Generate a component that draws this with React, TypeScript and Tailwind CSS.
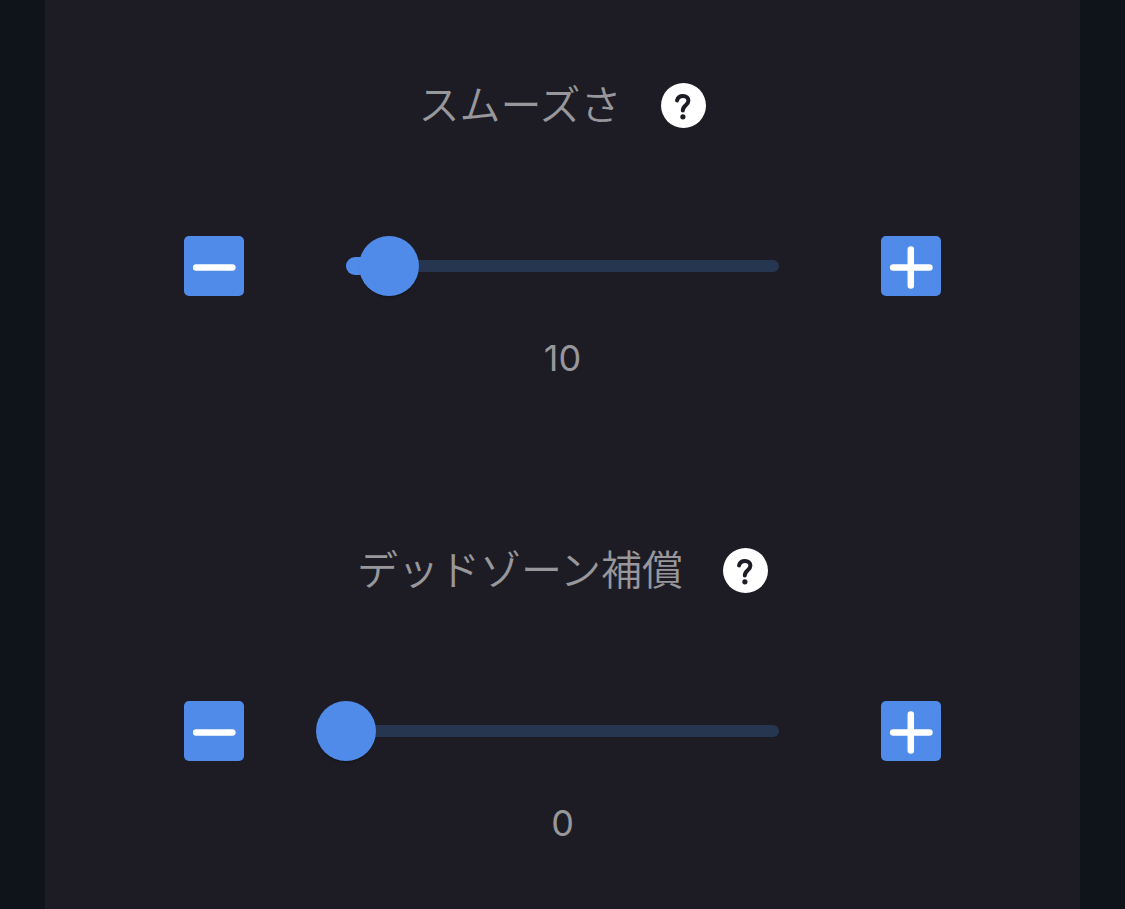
import { useId, useState } from "react";

interface SliderSettingProps {
  label: string;
  initialValue: number;
  min?: number;
  max?: number;
}

function HelpIcon() {
  return (
    <svg viewBox="0 0 45 45" className="size-[45px]" fill="none" aria-hidden="true">
      <circle cx="22.5" cy="22.5" r="22.5" fill="#fff" />
      <path
        d="M16 17.4C16.8 14.4 19 13 22 13C25.2 13 27.4 15 27.4 17.8C27.4 22.2 21.8 22.4 21.8 27.4"
        stroke="#1d1c24"
        strokeWidth="4"
        strokeLinecap="round"
        strokeLinejoin="round"
      />
      <circle cx="21.9" cy="33.8" r="2.6" fill="#1d1c24" />
    </svg>
  );
}

function StepButton({ kind, label, onClick }: { kind: "minus" | "plus"; label: string; onClick: () => void }) {
  return (
    <button
      type="button"
      aria-label={label}
      onClick={onClick}
      className="size-[60px] shrink-0 cursor-pointer rounded-[5px] bg-[#518bea]"
    >
      <svg viewBox="0 0 60 60" className="size-full" stroke="#fff" strokeWidth="6.5" strokeLinecap="round">
        <path d="M12.2 31.5H48.4" />
        {kind === "plus" && <path d="M29.8 13.5V49.5" />}
      </svg>
    </button>
  );
}

function SliderSetting({ label, initialValue, min = 0, max = 100 }: SliderSettingProps) {
  const id = useId();
  const [value, setValue] = useState(initialValue);
  const percent = ((value - min) / (max - min)) * 100;

  const step = (delta: number) => setValue((v) => Math.min(max, Math.max(min, v + delta)));

  return (
    <section className="flex flex-col items-center">
      <div className="flex h-[45px] items-center gap-10">
        <label htmlFor={id} className="text-[41px] leading-[43px] font-[350] whitespace-nowrap">
          {label}
        </label>
        <button type="button" aria-label={`${label}のヘルプ`} className="shrink-0 cursor-pointer rounded-full">
          <HelpIcon />
        </button>
      </div>

      <div className="mt-[108px] flex w-full items-center gap-[72px]">
        <StepButton kind="minus" label="減らす" onClick={() => step(-1)} />
        <div className="relative h-[60px] min-w-0 flex-1">
          {/* the track is inset by the thumb's radius */}
          <div className="absolute inset-x-[30px] top-6 h-3 rounded-full bg-[#263650]">
            <div className="absolute -top-[3px] left-0 h-[18px] rounded-full bg-[#518bea]" style={{ width: `${percent}%` }} />
          </div>
          <input
            id={id}
            type="range"
            min={min}
            max={max}
            value={value}
            onChange={(e) => setValue(Number(e.target.value))}
            className="absolute inset-0 h-full w-full cursor-pointer appearance-none bg-transparent [&::-webkit-slider-thumb]:size-[60px] [&::-webkit-slider-thumb]:appearance-none [&::-webkit-slider-thumb]:rounded-full [&::-webkit-slider-thumb]:bg-[#518bea] [&::-webkit-slider-thumb]:shadow-[0_3px_3px_-2px_rgba(0,0,0,0.4)]"
          />
        </div>
        <StepButton kind="plus" label="増やす" onClick={() => step(1)} />
      </div>

      <output htmlFor={id} className="mt-11 text-[36px] leading-9 font-normal">
        {value}
      </output>
    </section>
  );
}

export default function App() {
  return (
    <div className="min-h-screen bg-[#0f131a] px-[4%] font-[Inter,'Noto_Sans_CJK_JP',sans-serif] text-[#98979b]">
      <main className="flex min-h-screen flex-col gap-[172px] bg-[#1d1c24] px-[139px] pt-[83px] pb-12">
        <SliderSetting label="スムーズさ" initialValue={10} />
        <SliderSetting label="デッドゾーン補償" initialValue={0} />
      </main>
    </div>
  );
}
